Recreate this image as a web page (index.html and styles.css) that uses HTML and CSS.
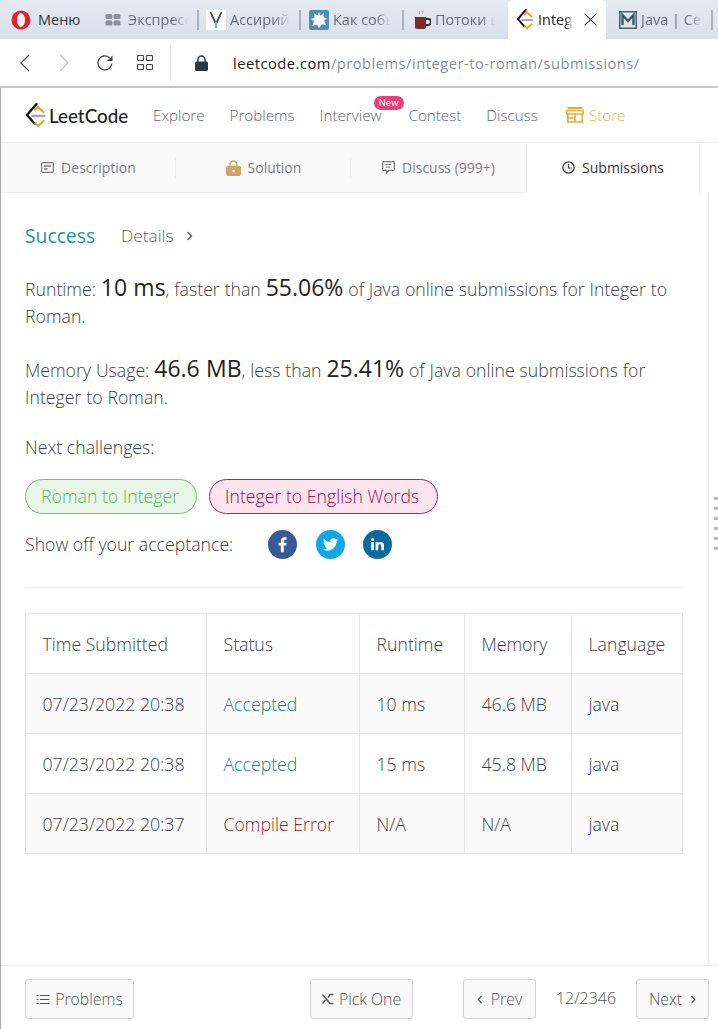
FILE: index.html
```html
<!DOCTYPE html>
<html lang="en">
<head>
<meta charset="utf-8">
<title>Integer to Roman - LeetCode</title>
<link rel="stylesheet" href="styles.css">
</head>
<body>
<div class="tabstrip">
  <div class="menu">
    <svg class="t-ico" width="20" height="20" viewBox="0 0 20 20"><ellipse cx="10" cy="10" rx="9.5" ry="9.5" fill="#e0202e"/><ellipse cx="10" cy="10" rx="4" ry="7" fill="#f3f5f8"/></svg>
    <span>Меню</span>
  </div>
  <div class="tb t-speed">
    <svg width="16" height="12" viewBox="0 0 15 12"><rect x="0" y="0" width="7" height="5" rx="1.500" fill="#8a9099"/><rect x="8" y="0" width="7" height="5" rx="1.500" fill="#8a9099"/><rect x="0" y="6.500" width="7" height="5" rx="1.500" fill="#8a9099"/><rect x="8" y="6.500" width="7" height="5" rx="1.500" fill="#8a9099"/></svg>
    <span class="tt w-speed">Экспресс</span>
  </div>
  <i class="sep"></i>
  <div class="tb t-a">
    <svg width="20" height="20" viewBox="0 0 20 20"><rect width="20" height="20" fill="#fff"/><path d="M4.500 2 10 14 15.500 2" fill="none" stroke="#444" stroke-width="1.800"/><path d="M10 12v6" stroke="#6ab0c8" stroke-width="2"/></svg>
    <span class="tt w-a">Ассирий</span>
  </div>
  <i class="sep"></i>
  <div class="tb t-b">
    <svg width="20" height="20" viewBox="0 0 20 20"><rect width="20" height="20" rx="2" fill="#4f8fb5"/><path d="M10 2l1.600 3.400L15 3l-.6 4L18 8.500l-3 2.200L17 15l-4-.8L10 18l-2-3.600L3.500 16 5 11 2 9l3.600-1.500L5 3.500l3.400 1.800z" fill="#fff"/></svg>
    <span class="tt w-b">Как собы</span>
  </div>
  <i class="sep"></i>
  <div class="tb t-c">
    <svg width="17" height="20" viewBox="0 0 17 20"><path d="M5 1c2 1-1 2 1 3M8 1c2 1-1 2 1 3" fill="none" stroke="#b88" stroke-width="1"/><path d="M1 7h11v10a2 2 0 0 1-2 2H3a2 2 0 0 1-2-2z" fill="#7b2b2b"/><path d="M12 9h2a2 2 0 0 1 0 6h-2" fill="none" stroke="#333" stroke-width="2"/></svg>
    <span class="tt w-c">Потоки в</span>
  </div>
  <div class="tab-active">
    <svg width="18" height="21" viewBox="0 0 21 25"><path d="M11.500 1 2 12l7.500 8.500" fill="none" stroke="#111" stroke-width="2.300" stroke-linecap="round"/><path d="M10 6.500l3-2.500 5.500 5M10.500 20.500l2.500 2.500 5.500-5" fill="none" stroke="#f0a225" stroke-width="2.300" stroke-linecap="round"/><path d="M7.500 13h12" stroke="#a8a8a8" stroke-width="2.300" stroke-linecap="round"/></svg>
    <span class="tt w-d">Integer</span>
    <svg class="close" width="13" height="13" viewBox="0 0 12 12"><path d="M.5.500l11 11M11.500.500l-11 11" stroke="#333" stroke-width="1"/></svg>
  </div>
  <div class="tb t-e">
    <svg width="18" height="18" viewBox="0 0 18 18"><rect x=".75" y=".75" width="16.500" height="16.500" fill="#dfe5ec" stroke="#4d6070" stroke-width="1.500"/><path d="M3.500 14V4l5.500 6 5.500-6v10" fill="none" stroke="#3f5566" stroke-width="2.400"/></svg>
    <span class="tt w-e">Java | Сем</span>
  </div>
  <i class="sep"></i>
</div>

<div class="addressbar">
  <svg class="nav-back" width="12" height="18" viewBox="0 0 12 18"><path d="M10 1 2 9l8 8" fill="none" stroke="#555" stroke-width="1.300"/></svg>
  <svg class="nav-fwd" width="12" height="18" viewBox="0 0 12 18"><path d="M2 1l8 8-8 8" fill="none" stroke="#c4c4c4" stroke-width="1.300"/></svg>
  <svg class="nav-reload" width="18" height="18" viewBox="0 0 18 18"><path d="M15.800 9.500A7 7 0 1 1 13.500 3.700" fill="none" stroke="#444" stroke-width="1.300"/><path d="M16.500 1.500v5.500h-5.500z" fill="#444"/></svg>
  <svg class="nav-grid" width="16" height="15" viewBox="0 0 16 15"><g fill="none" stroke="#444" stroke-width="1.100"><rect x=".55" y=".55" width="6" height="5" rx=".8"/><rect x="9.450" y=".55" width="6" height="5" rx=".8"/><rect x=".55" y="9.450" width="6" height="5" rx=".8"/><rect x="9.450" y="9.450" width="6" height="5" rx=".8"/></g></svg>
  <i class="addr-sep"></i>
  <svg class="lock" width="13" height="16" viewBox="0 0 13 16"><path d="M3 7V4.500a3.500 3.500 0 0 1 7 0V7" fill="none" stroke="#2e3640" stroke-width="1.500"/><rect y="6.500" width="13" height="9.500" rx="1.500" fill="#2e3640"/></svg>
  <div class="url"><span class="url-host">leetcode.com</span>/problems/integer-to-roman/submissions/</div>
</div>

<div class="page">
  <nav class="topnav">
    <a class="logo">
      <svg width="21" height="25" viewBox="0 0 21 25">
        <path d="M11.500 1 2 12l7.500 8.500" fill="none" stroke="#111" stroke-width="2.300" stroke-linecap="round"/>
        <path d="M10 6.500l3-2.500 5.500 5M10.500 20.500l2.500 2.500 5.500-5" fill="none" stroke="#f0a225" stroke-width="2.300" stroke-linecap="round"/>
        <path d="M7.500 13h12" stroke="#a8a8a8" stroke-width="2.300" stroke-linecap="round"/>
      </svg>
      <span class="logo-text">LeetCode</span>
    </a>
    <a class="nl">Explore</a>
    <a class="nl">Problems</a>
    <a class="nl nl-new">Interview<b class="new">New</b></a>
    <a class="nl">Contest</a>
    <a class="nl">Discuss</a>
    <a class="nl store">
      <svg width="18" height="16" viewBox="0 0 18 16"><path d="M1.500 1h15" stroke="#f0a83c" stroke-width="2"/><path d="M1 3.500h16l.5 3.500H.5z" fill="none" stroke="#f0a83c" stroke-width="1.600"/><path d="M1.800 7v8h14.400V7M9 7v8M1.800 11H9" fill="none" stroke="#f0a83c" stroke-width="1.600"/></svg>
      Store
    </a>
  </nav>

  <div class="tabs">
    <div class="tab t1">
      <svg width="13" height="11" viewBox="0 0 13 11"><rect x=".6" y=".6" width="11.800" height="9.800" rx="1.200" fill="none" stroke="#777" stroke-width="1.200"/><path d="M3 4h7M3 7h3.500" stroke="#777" stroke-width="1.300"/></svg>
      Description
    </div>
    <div class="tab t2">
      <svg width="15" height="16" viewBox="0 0 15 16"><path d="M4 7V4.500a3.500 3.500 0 0 1 7 0V7" fill="none" stroke="#cda566" stroke-width="1.500"/><rect y="6" width="15" height="10" rx="2" fill="#cda566"/><circle cx="7.500" cy="11" r="1.300" fill="#fff"/></svg>
      Solution
    </div>
    <div class="tab t3">
      <svg width="13" height="13" viewBox="0 0 13 13"><path d="M1.500.7h10a.8.8 0 0 1 .8.8v7a.8.8 0 0 1-.8.8H7L4.500 12V9.300h-3a.8.8 0 0 1-.8-.8v-7a.8.8 0 0 1 .8-.8z" fill="none" stroke="#777" stroke-width="1.200"/><path d="M3.500 3.500h6M3.500 6h4.500" stroke="#777" stroke-width="1.100"/></svg>
      Discuss (999+)
    </div>
    <div class="tab tab-on">
      <svg width="13" height="13" viewBox="0 0 13 13"><circle cx="6.500" cy="6.500" r="5.700" fill="none" stroke="#444" stroke-width="1.300"/><path d="M6.500 3v4H10" fill="none" stroke="#444" stroke-width="1.200"/></svg>
      Submissions
    </div>
  </div>

  <main class="content">
    <div class="result-head">
      <span class="success">Success</span>
      <span class="details">Details <svg width="7" height="10" viewBox="0 0 7 10"><path d="M1.500 1l4 4-4 4" fill="none" stroke="#555" stroke-width="1.400"/></svg></span>
    </div>
    <p class="stat stat1">Runtime: <b class="big">10 ms</b>, faster than <b class="big">55.06%</b> of Java online submissions for Integer to Roman.</p>
    <p class="stat stat2">Memory Usage: <b class="big">46.6 MB</b>, less than <b class="big">25.41%</b> of Java online submissions for Integer to Roman.</p>
    <p class="next">Next challenges:</p>
    <div class="pills">
      <span class="pill green">Roman to Integer</span>
      <span class="pill pink">Integer to English Words</span>
    </div>
    <div class="share">
      <span class="share-label">Show off your acceptance:</span>
      <span class="soc fb"><svg width="29" height="29" viewBox="0 0 30 30"><path d="M16.300 23v-7h2.500l.4-2.900h-2.900v-1.700c0-.8.300-1.300 1.400-1.300h1.500V7.500c-.3 0-1.200-.1-2.200-.1-2.200 0-3.700 1.300-3.700 3.800v1.900h-2.500V16h2.500v7z" fill="#fff"/></svg></span>
      <span class="soc tw"><svg width="29" height="29" viewBox="0 0 30 30"><path d="M23 10c-.6.300-1.200.4-1.900.5.700-.4 1.200-1 1.400-1.800-.6.400-1.300.6-2 .8a3.300 3.300 0 0 0-5.600 3C12.200 12.400 9.800 11 8.200 9c-.9 1.500-.4 3.400 1 4.400-.5 0-1-.2-1.500-.4 0 1.600 1.100 3 2.600 3.300-.5.100-1 .1-1.500 0 .4 1.300 1.600 2.200 3.100 2.300A6.600 6.600 0 0 1 7 19.900c5 3 13.800 1.200 14.400-8.300.6-.4 1.200-1 1.600-1.600z" fill="#fff"/></svg></span>
      <span class="soc li"><svg width="29" height="29" viewBox="0 0 30 30"><path d="M8.500 12.500h2.800V21H8.500zM9.900 8.200a1.600 1.600 0 1 1 0 3.200 1.600 1.600 0 0 1 0-3.200zM13 12.500h2.700v1.200c.4-.8 1.400-1.400 2.700-1.400 2.800 0 3.300 1.800 3.300 4.200V21h-2.800v-4c0-1 0-2.300-1.400-2.300s-1.700 1.100-1.700 2.200V21H13z" fill="#fff"/></svg></span>
    </div>
    <hr class="rule">
    <table class="subs">
      <tr class="row-head"><th class="c1">Time Submitted</th><th class="c2">Status</th><th class="c3">Runtime</th><th class="c4">Memory</th><th class="c5">Language</th></tr>
      <tr class="alt"><td>07/23/2022 20:38</td><td class="ok">Accepted</td><td>10 ms</td><td>46.6 MB</td><td>java</td></tr>
      <tr><td>07/23/2022 20:38</td><td class="ok">Accepted</td><td>15 ms</td><td>45.8 MB</td><td>java</td></tr>
      <tr class="alt"><td>07/23/2022 20:37</td><td class="err">Compile Error</td><td>N/A</td><td>N/A</td><td>java</td></tr>
    </table>
  </main>

  <footer class="footer">
    <a class="btn b-prob"><svg width="14" height="11" viewBox="0 0 13 11"><path d="M3.500 1.500H13M3.500 5.500H13M3.500 9.500H13M0 1.500h2M0 5.500h2M0 9.500h2" stroke="#555" stroke-width="1.100"/></svg> Problems</a>
    <a class="btn b-pick"><svg width="12" height="12" viewBox="0 0 12 12"><path d="M.5 1.500 8 10.500h3.500M.5 10.500 3.500 7M6 4.500l2-3h3.500" fill="none" stroke="#555" stroke-width="1.500"/></svg> Pick One</a>
    <a class="btn b-prev"><svg width="6" height="9" viewBox="0 0 6 9"><path d="M4.500 1 1.200 4.500l3.300 3.500" fill="none" stroke="#555" stroke-width="1.200"/></svg> Prev</a>
    <span class="count">12/2346</span>
    <a class="btn b-next">Next <svg width="6" height="9" viewBox="0 0 6 9"><path d="M1.500 1l3.300 3.500L1.500 8" fill="none" stroke="#555" stroke-width="1.200"/></svg></a>
  </footer>

  <div class="handle"><i></i><i></i><i></i><i></i><i></i><i></i></div>
</div>
</body>
</html>
```
FILE: styles.css
```css
* { box-sizing: border-box; }
html, body { margin: 0; height: 1029px; overflow: hidden; }
body { font-family: "Open Sans", "Noto Sans", sans-serif; font-weight: 300; color: #333; background: #fff; width: 718px; }
p { margin: 0; }

.tabstrip { height: 39px; display: flex; align-items: center; background: linear-gradient(#e4eaf2, #d8e0ea); padding-left: 11px; font-size: 14.500px; font-weight: 400; color: #666e78; white-space: nowrap; }
.menu { display: flex; align-items: center; gap: 7px; width: 94px; color: #333; flex: none; }
.tb { display: flex; align-items: center; gap: 4px; flex: none; }
.sep { width: 2px; height: 20px; background: #aab2bb; flex: none; }
.t-speed { width: 92px; gap: 7px; }
.t-a { width: 100px; padding-left: 7px; }
.t-b { width: 101px; padding-left: 8px; }
.t-c { width: 104px; padding-left: 10px; }
.tt { display: block; overflow: hidden; -webkit-mask-image: linear-gradient(90deg, #000 75%, transparent); mask-image: linear-gradient(90deg, #000 75%, transparent); }
.w-speed { width: 60px; }
.w-a { width: 60px; }
.w-b { width: 58px; }
.w-c { width: 60px; }
.w-d { width: 36px; color: #222; }
.w-e { width: 62px; }
.tab-active { align-self: stretch; width: 98px; background: #fff; border-radius: 4px 4px 0 0; display: flex; align-items: center; gap: 4px; padding-left: 8px; flex: none; }
.close { margin-left: 6px; flex: none; }
.t-e { width: 105px; padding-left: 13px; }

.addressbar { height: 49px; display: flex; align-items: center; background: #fff; border-bottom: 2px solid #c4c6c8; padding-left: 19px; }
.nav-fwd { margin-left: 27px; }
.nav-reload { margin-left: 26px; }
.nav-grid { margin-left: 23px; }
.addr-sep { width: 1px; height: 36px; background: #e6e6e6; margin-left: 17px; }
.lock { margin-left: 24px; }
.url { margin-left: 25px; font-size: 14.700px; font-weight: 400; color: #8a8f94; letter-spacing: .5px; white-space: nowrap; }
.url-host { color: #222; }

.page { position: relative; height: 941px; border-left: 1px solid #a8a8a8; display: flex; flex-direction: column; }
.topnav { height: 55px; display: flex; align-items: center; padding-left: 24px; border-bottom: 1px solid #eee; font-size: 15.200px; color: #5d6670; flex: none; }
.logo { display: flex; align-items: center; gap: 3px; width: 128px; flex: none; }
.logo-text { font-family: "Lato", sans-serif; font-weight: 500; font-size: 18.800px; color: #222; }
.nl { margin-right: 25px; position: relative; display: flex; align-items: center; gap: 5px; }
.nl-new { margin-right: 27px; }
.new { position: absolute; left: 54px; top: -9px; height: 14px; width: 30px; border-radius: 7px; background: #e8407a; color: #fff; font-size: 9.500px; font-weight: 400; text-align: center; line-height: 14px; }
.store { color: #f0ae45; margin-left: 3px; }

.tabs { height: 50px; display: flex; background: #fff; font-size: 14px; font-weight: 400; color: #7a8087; flex: none; }
.tab { display: flex; align-items: center; justify-content: center; gap: 7px; position: relative; background: #fafafa; border-bottom: 1px solid #eee; }
.t1 { width: 175px; }
.t2 { width: 175px; }
.t3 { width: 175px; }
.t1::after, .t2::after { content: ""; position: absolute; right: 0; top: 15px; height: 20px; width: 1px; background: #eee; }
.tab-on { width: 174px; background: #fff; color: #333; border-left: 1px solid #eee; border-right: 1px solid #eee; border-bottom: 0; padding-bottom: 1px; }

.content { flex: 1; margin-right: 9px; border-right: 1px solid #eee; padding: 0 25px 0 24px; font-size: 17.700px; color: #3c4248; }
.result-head { display: flex; align-items: center; gap: 26px; height: 24px; margin-top: 30px; }
.success { color: #1a9a8a; font-size: 19.300px; font-weight: 400; }
.details { color: #5e666e; font-size: 17.300px; display: flex; align-items: center; gap: 12px; }
.details svg { margin-top: 2px; }
.stat { line-height: 27px; word-spacing: .3px; }
.stat1 { margin-top: 29px; }
.stat2 { margin-top: 27px; }
.big { font-size: 23px; font-weight: 400; color: #222; line-height: 1; }
.next { margin-top: 23px; line-height: 27px; }
.pills { display: flex; gap: 12px; margin-top: 18px; }
.pill { height: 35px; border-radius: 18px; border: 1px solid; padding: 0 15px; line-height: 33px; white-space: nowrap; }
.pill.green { width: 172px; background: #e8f6e8; border-color: #74c27a; color: #62b76c; }
.pill.pink { width: 229px; background: #fce4ee; border-color: #b81e62; color: #a30f52; }
.share { display: flex; align-items: center; height: 30px; margin-top: 15px; }
.share-label { width: 243px; }
.soc { width: 29px; height: 29px; border-radius: 50%; margin-right: 18.500px; display: block; }
.soc svg { display: block; }
.fb { background: #3b5998; }
.tw { background: #0fa9e6; }
.li { background: #0a6a9c; }
.rule { border: 0; border-top: 1px solid #eee; margin: 28px 0 25px; }

.subs { width: 658px; border-collapse: collapse; table-layout: fixed; }
.subs th, .subs td { border: 1px solid #e7e7e7; height: 60px; padding: 0 0 0 16.500px; text-align: left; font-weight: 300; white-space: nowrap; overflow: hidden; }
.c1 { width: 181px; }
.c2 { width: 153px; }
.c3 { width: 105px; }
.c4 { width: 107px; }
.c5 { width: 111px; }
.alt { background: #fafafa; }
.subs td.ok { color: #0f8a7a; }
.subs td.err { color: #a81c1c; }

.footer { height: 64px; border-top: 1px solid #eee; display: flex; align-items: flex-start; padding: 13px 0 0 24px; font-size: 15.800px; color: #555; flex: none; }
.btn { height: 40px; border: 1px solid #d4d4d4; border-radius: 3px; background: #f9f9f9; display: flex; align-items: center; justify-content: center; gap: 5px; flex: none; }
.b-prob { width: 109px; }
.b-pick { width: 103px; margin-left: 176px; }
.b-prev { width: 73px; margin-left: 50px; gap: 8px; }
.count { width: 100px; text-align: center; line-height: 38px; font-size: 16px; }
.b-next { width: 73px; gap: 8px; }

.handle { position: absolute; right: 0; top: 409px; width: 4px; display: flex; flex-direction: column; gap: 7px; }
.handle i { display: block; width: 4px; height: 3px; background: #bbb; }
```
